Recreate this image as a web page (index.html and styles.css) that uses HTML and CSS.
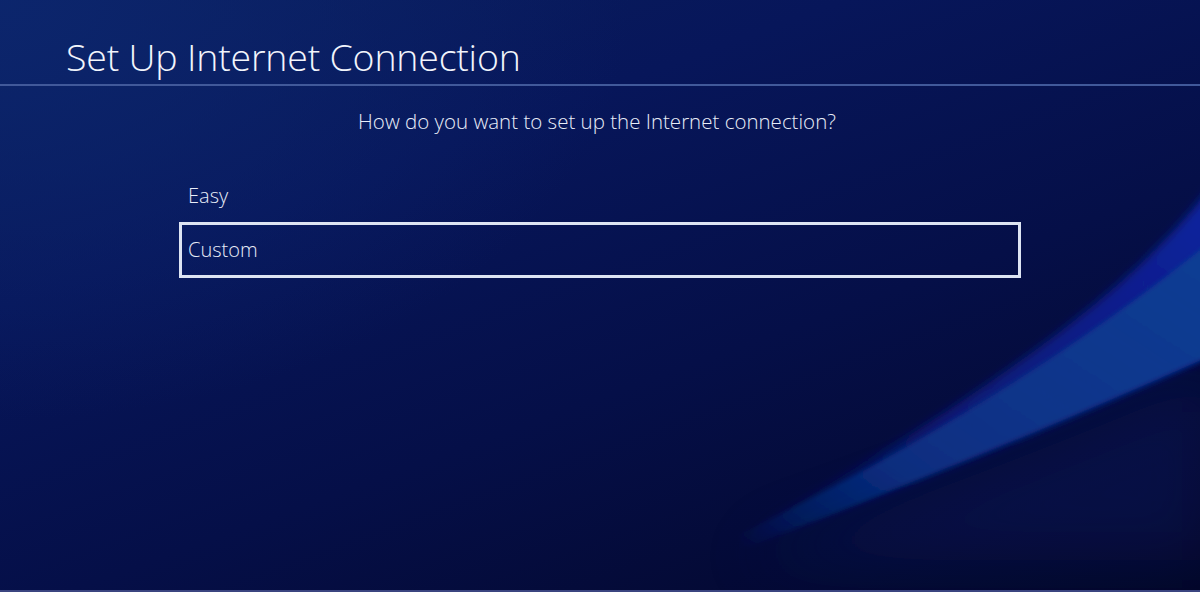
FILE: index.html
```html
<!DOCTYPE html>
<html lang="en">
<head>
<meta charset="utf-8">
<title>Set Up Internet Connection</title>
<link rel="stylesheet" href="styles.css">
</head>
<body>
<div class="screen">
  <svg class="wave" width="1200" height="592" viewBox="0 0 1200 592" aria-hidden="true">
    <defs>
      <filter id="blur" x="-20%" y="-20%" width="140%" height="140%">
        <feGaussianBlur stdDeviation="5"/>
      </filter>
      <filter id="blur2" x="-20%" y="-20%" width="140%" height="140%">
        <feGaussianBlur stdDeviation="2"/>
      </filter>
      <filter id="glow" x="-30%" y="-30%" width="160%" height="160%">
        <feGaussianBlur stdDeviation="30"/>
      </filter>
      <linearGradient id="bandOuter" x1="0" y1="1" x2="1" y2="0">
        <stop offset="0" stop-color="#0a1a7a" stop-opacity="0"/>
        <stop offset="0.4" stop-color="#0b1d88" stop-opacity="0.75"/>
        <stop offset="1" stop-color="#0c22a0"/>
      </linearGradient>
      <linearGradient id="bandInner" x1="0" y1="1" x2="1" y2="0">
        <stop offset="0" stop-color="#0a3080" stop-opacity="0"/>
        <stop offset="0.3" stop-color="#0a3486" stop-opacity="0.8"/>
        <stop offset="1" stop-color="#0b3e94"/>
      </linearGradient>
    </defs>
    <path d="M740 560 Q 1000 470 1210 380 L 1210 560 Z" fill="#0a1a66" opacity="0.35" filter="url(#glow)"/>
    <path d="M760 525 C 1000 385, 1130 292, 1210 188 L 1210 356 Q 1000 452 740 550 Z" fill="url(#bandOuter)" filter="url(#blur)"/>
    <path d="M740 534 Q 1015 400 1210 242 L 1210 356 Q 1000 450 740 550 Z" fill="url(#bandInner)" filter="url(#blur2)"/>
  </svg>
  <header class="top">
    <h1 class="title">Set Up Internet Connection</h1>
  </header>
  <main class="content">
    <p class="question">How do you want to set up the Internet connection?</p>
    <ul class="options">
      <li class="option">Easy</li>
      <li class="option selected">Custom</li>
    </ul>
  </main>
</div>
</body>
</html>
```

FILE: styles.css
```css
html, body {
  margin: 0;
  padding: 0;
  height: 100%;
}
body {
  background: #040a3a;
  font-family: "Open Sans", "DejaVu Sans", sans-serif;
  font-weight: 300;
  color: #e8edf8;
  overflow: hidden;
}
.screen {
  position: relative;
  width: 1200px;
  height: 592px;
  overflow: hidden;
  background:
    radial-gradient(ellipse 900px 600px at 0% 0%, rgba(12, 38, 110, 0.9), rgba(12, 38, 110, 0) 70%),
    linear-gradient(160deg, #0a1f5e 0%, #07165a 30%, #050f48 60%, #030628 100%);
  border-bottom: 2px solid #3b4580;
  box-sizing: border-box;
}
.wave {
  position: absolute;
  left: 0;
  top: 0;
  pointer-events: none;
}
.top {
  position: relative;
  height: 84px;
  border-bottom: 2px solid #41599a;
  padding-left: 66px;
  display: flex;
  align-items: flex-end;
}
.title {
  margin: 0 0 3px 0;
  font-weight: 300;
  font-size: 37.5px;
  line-height: 48px;
  letter-spacing: -0.2px;
  color: #f2f5fc;
}
.content {
  position: relative;
  padding: 0 179px;
}
.question {
  margin: 21px 0 0 0;
  text-align: center;
  font-size: 20.5px;
  line-height: 28px;
  padding-right: 6px;
}
.options {
  list-style: none;
  margin: 43px 0 0 0;
  padding: 0;
}
.option {
  font-size: 20px;
  padding-left: 9px;
  box-sizing: border-box;
}
.option:first-child {
  height: 44px;
  line-height: 36px;
}
.option.selected {
  height: 56px;
  line-height: 50px;
  border: 3px solid #dde4f3;
  padding-left: 6px;
}
```
